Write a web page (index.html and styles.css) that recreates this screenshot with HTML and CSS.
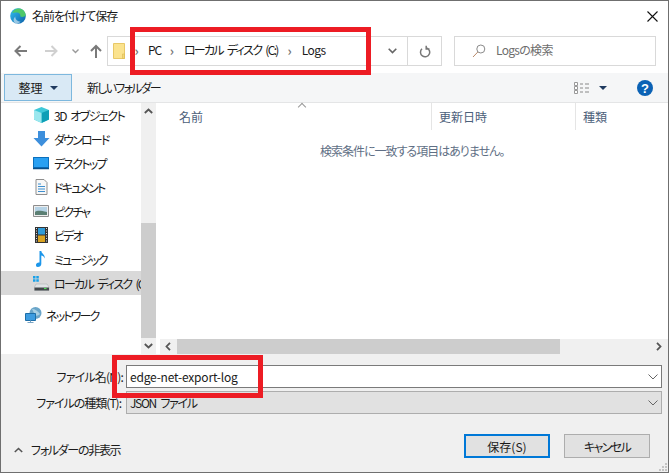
FILE: index.html
```html
<!DOCTYPE html>
<html lang="ja">
<head>
    <meta charset="UTF-8">
    <meta name="viewport" content="width=device-width, initial-scale=1.0">
    <title>名前を付けて保存</title>
    <link rel="stylesheet" href="styles.css">
</head>
<body>
    <div class="dialog">
        <div class="titlebar">
            <svg class="edge-logo" width="16" height="16" viewBox="0 0 16 16">
                <defs>
                    <linearGradient id="edge-a" x1="0" y1="0" x2="1" y2="1">
                        <stop offset="0" stop-color="#35c1f1"/>
                        <stop offset="1" stop-color="#0b5fa8"/>
                    </linearGradient>
                </defs>
                <circle cx="8" cy="8" r="7.8" fill="url(#edge-a)"/>
                <path d="M2 5C3.500 1.500 7 .2 9.500.5c3.200.5 6 3 6.300 6.800-1 1.700-4 2-5.500 1.200.5-2-1-4-3.500-4C4.800 4.500 3 4.800 2 5z" fill="#4fc86a"/>
                <path d="M5.200 8.500c0 3 2.500 5 5.300 5-1 1.500-3 2.200-4.500 2-2.500-.8-3.500-4-.8-7z" fill="#fff" opacity=".55"/>
            </svg>
            <span class="title-text">名前を付けて保存</span>
            <svg class="close-icon" width="11" height="11" viewBox="0 0 11 11">
                <path d="M.5.500l10 10M10.500.500l-10 10" stroke="#111" stroke-width="1.100" fill="none"/>
            </svg>
        </div>

        <div class="navbar">
            <div class="nav-buttons">
                <svg width="14" height="12" viewBox="0 0 14 12"><path d="M13 6H2M6.500 1L1.500 6l5 5" stroke="#7a7a7a" stroke-width="2" fill="none"/></svg>
                <svg class="nav-forward" width="14" height="12" viewBox="0 0 14 12"><path d="M1 6h11M7.500 1l5 5-5 5" stroke="#d0d0d0" stroke-width="2" fill="none"/></svg>
                <svg class="nav-recent" width="7" height="5" viewBox="0 0 7 5"><path d="M.5.500l3 3 3-3" stroke="#9a9a9a" stroke-width="1.400" fill="none"/></svg>
                <svg class="nav-up" width="12" height="14" viewBox="0 0 12 14"><path d="M6 14V2M1 7l5-5 5 5" stroke="#7a7a7a" stroke-width="2" fill="none"/></svg>
            </div>
            <div class="address">
                <svg class="folder" width="12" height="16" viewBox="0 0 12 16"><path d="M.5.500h11v15H.5z" fill="#fbe38e" stroke="#e8c867"/><path d="M9.500 11h2v4.500h-2z" fill="#f3d777" stroke="#dcb94f" stroke-width=".6"/></svg>
                <span class="crumb-sep first">›</span>
                <span class="crumb crumb-pc">PC</span>
                <span class="crumb-sep">›</span>
                <span class="crumb">ローカル ディスク (C:)</span>
                <span class="crumb-sep">›</span>
                <span class="crumb crumb-last">Logs</span>
                <svg class="address-drop" width="9" height="6" viewBox="0 0 9 6"><path d="M.7.700L4.500 4.500 8.300.700" stroke="#666" stroke-width="1.600" fill="none"/></svg>
                <div class="refresh">
                    <svg width="12" height="13" viewBox="0 0 12 13"><path d="M7 2.200A4.600 4.600 0 1 1 3 3.300M7.200 .2v3.400H10.500" stroke="#777" stroke-width="1.500" fill="none" transform="translate(0 .5)"/></svg>
                </div>
            </div>
            <div class="searchbox">
                <svg width="14" height="14" viewBox="0 0 14 14"><circle cx="8.800" cy="5" r="4" stroke="#8a8a8a" fill="none"/><path d="M5.800 8L1 13" stroke="#b98a6a" fill="none"/></svg>
                <span>Logsの検索</span>
            </div>
        </div>

        <div class="toolbar">
            <div class="organize">整理<i class="caret-down"></i></div>
            <span class="new-folder">新しいフォルダー</span>
            <div class="toolbar-right">
                <svg width="16" height="12" viewBox="0 0 16 12"><path d="M.5.500h3v3h-3zM.5 4.500h3v3h-3zM.5 8.500h3v3h-3z" fill="#fff" stroke="#999"/><path d="M6 2h3M11 2h4M6 6h3M11 6h4M6 10h3M11 10h4" stroke="#888"/></svg>
                <i class="caret-down views-caret"></i>
                <svg class="help" width="16" height="16" viewBox="0 0 16 16"><circle cx="8" cy="8" r="8" fill="#0b62b5"/><text x="8" y="12.500" text-anchor="middle" class="help-mark">?</text></svg>
            </div>
        </div>

        <div class="main">
            <div class="sidebar">
                <ul class="tree">
                    <li class="item-3d">
                        <svg width="17" height="16" viewBox="0 0 17 16"><path d="M8.500 0L16 3v9.500L8.500 16 1 12.500V3z" fill="#3fc8d8"/><path d="M8.500 6L16 3v9.500L8.500 16z" fill="#0e9fb6"/><path d="M1 3l7.500 3v10L1 12.500z" fill="#9be7ee"/></svg>
                        3D オブジェクト
                    </li>
                    <li>
                        <svg width="17" height="16" viewBox="0 0 17 16"><path d="M5 0h7v7h4.500L8.500 15.500.5 7H5z" fill="#3d8fdc"/></svg>
                        ダウンロード
                    </li>
                    <li>
                        <svg width="17" height="14" viewBox="0 0 17 14"><path d="M0 1h16v12H0z" fill="#1e8fe8"/><path d="M.5 1.500h15v10H.5z" fill="#29a0f2" stroke="#0b6fbc"/><path d="M0 12.500h16" stroke="#0a4f88" stroke-width="1.500"/></svg>
                        デスクトップ
                    </li>
                    <li>
                        <svg width="17" height="16" viewBox="0 0 17 16"><path d="M3 .500h8l3 3v12H3z" fill="#f7f7f7" stroke="#8f8f8f"/><path d="M5 5h3M5 7.500h7M5 10h7M5 12.500h7" stroke="#3d8fd0"/></svg>
                        ドキュメント
                    </li>
                    <li>
                        <svg width="17" height="14" viewBox="0 0 17 14"><path d="M.5 1.500h15v11H.5z" fill="#eee" stroke="#8d8d8d"/><path d="M2 3h12v8H2z" fill="#b6d3e6"/><path d="M2 8c3-2 6-1 12 0v3H2z" fill="#5b7f73"/></svg>
                        ピクチャ
                    </li>
                    <li>
                        <svg width="17" height="16" viewBox="0 0 17 16"><path d="M2 0h13v16H2z" fill="#333"/><path d="M5 1h7v6.500H5z" fill="#2f9bd8"/><path d="M5 8.500h7V15H5z" fill="#d9a322"/><path d="M3 1.500h1M3 4h1M3 6.500h1M3 9h1M3 11.500h1M3 14h1M13 1.500h1M13 4h1M13 6.500h1M13 9h1M13 11.500h1M13 14h1" stroke="#ddd"/></svg>
                        ビデオ
                    </li>
                    <li>
                        <svg width="17" height="16" viewBox="0 0 17 16"><path d="M6.500 0h1.800c.2 3 4.200 3.500 3.200 7.500-.4-2-1.800-2.800-3.200-3V13c0 1.800-1.700 3-3.500 3S3 15 3 13.800c0-1.500 1.700-2.600 3.500-2.300z" fill="#1c96ea"/></svg>
                        ミュージック
                    </li>
                    <li class="selected">
                        <svg width="17" height="15" viewBox="0 0 17 15"><path d="M0 0h2.500v2.500H0zM3.300 0h2.500v2.500H3.300zM0 3.300h2.500v2.500H0zM3.300 3.300h2.500v2.500H3.300z" fill="#18a0e8"/><path d="M3 8h11l2 3v3.500H1.500V11z" fill="#dfe3e5" stroke="#a5a8aa" stroke-width=".5"/><path d="M1.500 11.500h14.500v3H1.500z" fill="#44494c"/><path d="M11 12.500h2.500" stroke="#4fe05a" stroke-width="1.200"/></svg>
                        <span class="clip">ローカル ディスク (C:)</span>
                    </li>
                    <li class="tree-gap network">
                        <svg width="17" height="16" viewBox="0 0 17 16"><circle cx="10.500" cy="6" r="6" fill="#6aa5c9"/><path d="M7 2c3 0 6 2 8 5-2 2-4 2-5 1z" fill="#a8cfe3"/><path d="M.5 6.500h10v7H.5z" fill="#3d9ce0" stroke="#1d6ea8"/><path d="M5.500 13.500v2M2.500 15.500h6" stroke="#7aa5c4"/></svg>
                        ネットワーク
                    </li>
                </ul>
                <div class="vscroll">
                    <svg class="arrow" width="9" height="6" viewBox="0 0 9 6"><path d="M.8 5L4.500 1.500 8.200 5" stroke="#555" stroke-width="1.800" fill="none"/></svg>
                    <div class="vtrack"><div class="vthumb"></div></div>
                    <svg class="arrow" width="9" height="6" viewBox="0 0 9 6"><path d="M.8 1L4.500 4.500 8.200 1" stroke="#555" stroke-width="1.800" fill="none"/></svg>
                </div>
            </div>

            <div class="files">
                <div class="file-head">
                    <i class="sort-caret"></i>
                    <div class="col col-name">名前</div>
                    <div class="col col-date">更新日時</div>
                    <div class="col col-type">種類</div>
                </div>
                <div class="empty">検索条件に一致する項目はありません。</div>
                <div class="hscroll">
                    <svg class="arrow-h" width="6" height="9" viewBox="0 0 6 9"><path d="M5 .8L1.500 4.500 5 8.200" stroke="#555" stroke-width="1.800" fill="none"/></svg>
                    <div class="htrack"><div class="hthumb"></div></div>
                    <svg class="arrow-h" width="6" height="9" viewBox="0 0 6 9"><path d="M1 .8L4.500 4.500 1 8.200" stroke="#555" stroke-width="1.800" fill="none"/></svg>
                </div>
            </div>
        </div>

        <div class="bottom">
            <div class="field-row">
                <label class="field-label">ファイル名(N):</label>
                <div class="field field-name">
                    <span>edge-net-export-log</span>
                    <svg width="10" height="6" viewBox="0 0 10 6"><path d="M.5.500L5 5 9.500.500" stroke="#666" fill="none"/></svg>
                </div>
            </div>
            <div class="field-row second">
                <label class="field-label">ファイルの種類(T):</label>
                <div class="field field-type">
                    <span>JSON ファイル</span>
                    <svg width="10" height="6" viewBox="0 0 10 6"><path d="M.5.500L5 5 9.500.500" stroke="#666" fill="none"/></svg>
                </div>
            </div>
            <div class="actions">
                <div class="hide-folders">
                    <svg width="9" height="6" viewBox="0 0 9 6"><path d="M.8 5L4.500 1.500 8.200 5" stroke="#555" stroke-width="1.600" fill="none"/></svg>
                    フォルダーの非表示
                </div>
                <button class="btn btn-primary" type="button">保存(S)</button>
                <button class="btn btn-cancel" type="button">キャンセル</button>
            </div>
            <svg class="grip" width="8" height="8" viewBox="0 0 8 8"><path d="M6 0h2v2H6zM3 3h2v2H3zM6 3h2v2H6zM0 6h2v2H0zM3 6h2v2H3zM6 6h2v2H6z" fill="#c4c4c4"/></svg>
        </div>

        <div class="mark mark-address"></div>
        <div class="mark mark-name"></div>
    </div>
</body>
</html>
```

FILE: styles.css
```css
* {
    box-sizing: border-box;
}
body {
    margin: 0;
    font-family: "Noto Sans CJK JP", "Noto Sans", sans-serif;
    font-size: 12px;
    font-feature-settings: "palt";
    color: #1a1a1a;
    background: #fff;
    overflow: hidden;
}
.dialog {
    position: relative;
    display: flex;
    flex-direction: column;
    width: 669px;
    height: 473px;
    border: 1px solid #6f6f6f;
    background: #fff;
}

/* title */
.titlebar {
    display: flex;
    align-items: center;
    height: 30px;
    padding: 0 10px 0 9px;
}
.title-text {
    margin-left: 6px;
    padding-bottom: 2px;
    letter-spacing: -1.1px;
}
.close-icon {
    margin-left: auto;
}

/* nav row */
.navbar {
    display: flex;
    align-items: center;
    height: 30px;
    margin-top: 5px;
    padding-right: 12px;
}
.nav-buttons {
    display: flex;
    align-items: center;
    width: 106px;
    padding-left: 13px;
}
.nav-forward {
    margin-left: 16px;
}
.nav-recent {
    margin-left: 14px;
}
.nav-up {
    margin-left: 11px;
}
.address {
    display: flex;
    align-items: center;
    width: 335px;
    height: 30px;
    padding-left: 5px;
    border: 1px solid #d9d9d9;
}
.crumb {
    padding-bottom: 3px;
    letter-spacing: -1.7px;
    word-spacing: 3px;
}
.crumb-pc {
    letter-spacing: -1.2px;
    margin-right: -1px;
}
.crumb-last {
    letter-spacing: -.5px;
}
.crumb-sep {
    width: 24px;
    padding-bottom: 2px;
    text-align: center;
    color: #777;
    font-size: 13px;
    font-weight: bold;
}
.crumb-sep.first {
    width: 23px;
}
.address-drop {
    margin-left: auto;
    margin-right: 10px;
}
.refresh {
    display: flex;
    align-items: center;
    justify-content: center;
    width: 34px;
    height: 100%;
    border-left: 1px solid #d9d9d9;
}
.searchbox {
    display: flex;
    align-items: center;
    width: 202px;
    height: 30px;
    margin-left: 12px;
    padding-left: 17px;
    border: 1px solid #d9d9d9;
    color: #6d6d6d;
}
.searchbox span {
    margin-left: 10px;
    padding-bottom: 3px;
    letter-spacing: -.7px;
}

/* toolbar */
.toolbar {
    display: flex;
    align-items: center;
    height: 30px;
    margin-top: 7px;
    padding-left: 3px;
    background: #f5f6f7;
    border-bottom: 1px solid #e4e5e6;
}
.organize {
    display: flex;
    align-items: center;
    justify-content: center;
    width: 68px;
    height: 27px;
    background: #d9e9f5;
    border: 1px solid #7db8de;
}
.caret-down {
    display: inline-block;
    width: 0;
    height: 0;
    margin-left: 7px;
    border-left: 4px solid transparent;
    border-right: 4px solid transparent;
    border-top: 4px solid #1f3a5f;
}
.new-folder {
    margin-left: 15px;
    letter-spacing: -1.75px;
}
.toolbar-right {
    display: flex;
    align-items: center;
    margin-left: auto;
    padding-right: 15px;
}
.views-caret {
    margin-left: 9px;
}
.help {
    margin-left: 30px;
}
.help-mark {
    font-family: "Liberation Sans", sans-serif;
    font-size: 13px;
    font-weight: bold;
    fill: #fff;
}

/* main area */
.main {
    display: flex;
    flex: 1;
    min-height: 0;
}
.sidebar {
    display: flex;
    width: 155px;
}
.tree {
    flex: 1;
    width: 140px;
    margin: 0;
    padding: 0;
    list-style: none;
    overflow: hidden;
}
.tree li {
    display: flex;
    align-items: center;
    gap: 4px;
    height: 24px;
    padding-left: 32px;
    white-space: nowrap;
    letter-spacing: -1.8px;
}
.tree li.item-3d {
    letter-spacing: -1.5px;
    word-spacing: 3px;
}
.tree li svg {
    flex: none;
}
.tree li.selected {
    background: #d9d9d9;
}
.tree li.tree-gap {
    margin-top: 8px;
    padding-left: 24px;
}
.clip {
    overflow: hidden;
    letter-spacing: -1.7px;
    word-spacing: 3px;
}
.vscroll {
    display: flex;
    flex-direction: column;
    align-items: center;
    width: 15px;
    background: #f0f0f0;
}
.vscroll .arrow {
    flex: none;
    margin: 5px 0;
}
.vtrack {
    display: flex;
    flex: 1;
    flex-direction: column;
    justify-content: flex-end;
    width: 100%;
}
.vthumb {
    height: 115px;
    background: #cdcdcd;
}
.files {
    display: flex;
    flex: 1;
    flex-direction: column;
    margin-left: 4px;
    min-width: 0;
}
.file-head {
    position: relative;
    display: flex;
    height: 27px;
    color: #4c607a;
}
.col {
    display: flex;
    align-items: center;
    padding-left: 7px;
    border-right: 1px solid #e5e5e5;
}
.col-name {
    width: 272px;
    padding-left: 19px;
}
.col-date {
    width: 144px;
}
.col-type {
    flex: 1;
    border-right: none;
}
.sort-caret {
    position: absolute;
    left: 139px;
    top: 1px;
    width: 6px;
    height: 6px;
    border-left: 1px solid #999;
    border-top: 1px solid #999;
    transform: rotate(45deg);
}
.empty {
    flex: 1;
    padding: 12px 0 0 160px;
    color: #5f6f85;
    letter-spacing: -1px;
}
.hscroll {
    display: flex;
    align-items: center;
    height: 15px;
    background: #f0f0f0;
}
.arrow-h {
    flex: none;
    margin: 0 6px 0 5px;
}
.htrack {
    flex: 1;
    height: 100%;
}
.hthumb {
    width: 383px;
    height: 100%;
    background: #cdcdcd;
}

/* bottom panel */
.bottom {
    position: relative;
    flex: none;
    height: 118px;
    padding: 11px 6px 0 0;
    background: #f0f0f0;
}
.field-row {
    display: flex;
    align-items: center;
}
.field-row.second {
    margin-top: 3px;
}
.field-label {
    width: 125px;
    padding-right: 3px;
    text-align: right;
    white-space: nowrap;
    letter-spacing: -.8px;
}
.second .field-label {
    padding-right: 5px;
    letter-spacing: -1px;
}
.field {
    display: flex;
    flex: 1;
    align-items: center;
    justify-content: space-between;
    padding: 0 3px 0 3px;
    border: 1px solid #7a7a7a;
}
.field-name {
    height: 23px;
    background: #fff;
    letter-spacing: -.2px;
}
.field-type {
    height: 23px;
    background: #e1e1e1;
    border-color: #adadad;
    letter-spacing: -1.3px;
    word-spacing: 3px;
}
.actions {
    display: flex;
    align-items: center;
    margin-top: 20px;
    padding-right: 12px;
}
.hide-folders {
    display: flex;
    align-items: center;
    gap: 8px;
    margin-right: auto;
    padding: 7px 0 0 13px;
    letter-spacing: -1.3px;
}
.btn {
    width: 86px;
    height: 24px;
    margin-left: 14px;
    padding: 0;
    font: inherit;
    font-feature-settings: inherit;
    color: #1a1a1a;
    background: #e1e1e1;
    border: 1px solid #adadad;
}
.btn-cancel {
    letter-spacing: -1.6px;
}
.btn-primary {
    border: 2px solid #0078d7;
}
.grip {
    position: absolute;
    right: 1px;
    bottom: 1px;
}

/* red markers over the screenshot */
.mark {
    position: absolute;
    border: 5px solid #ed1c24;
}
.mark-address {
    left: 129px;
    top: 26px;
    width: 241px;
    height: 48px;
}
.mark-name {
    left: 111px;
    top: 354px;
    width: 151px;
    height: 43px;
}
```
